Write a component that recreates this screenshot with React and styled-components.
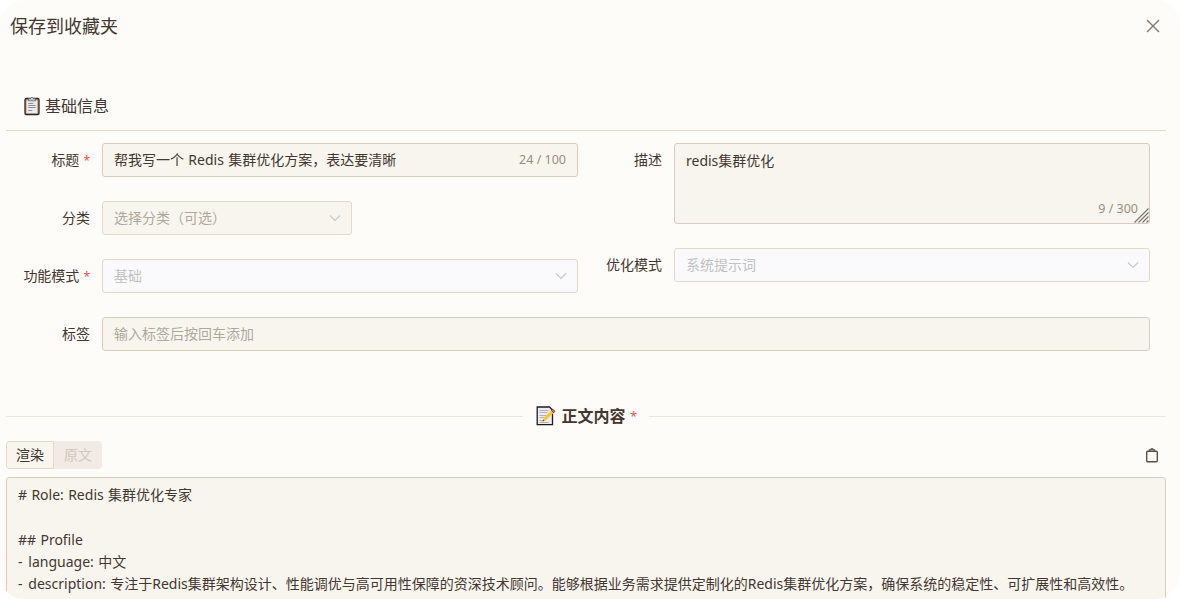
import React, { useState } from "react";
import styled, { createGlobalStyle } from "styled-components";

const lines = [
  { text: "# Role: Redis 集群优化专家" },
  { text: "" },
  { text: "## Profile" },
  { text: " language: 中文", item: true },
  {
    text: " description: 专注于Redis集群架构设计、性能调优与高可用性保障的资深技术顾问。能够根据业务需求提供定制化的Redis集群优化方案，确保系统的稳定性、可扩展性和高效性。",
    item: true,
  },
];

const ChevronIcon = () => (
  <Chevron viewBox="0 0 12 12">
    <path d="M1 3.5 L6 8.5 L11 3.5" />
  </Chevron>
);

const ClipboardIcon = () => (
  <svg width="20" height="20" viewBox="0 0 20 20">
    <rect x="3" y="2.5" width="14" height="16" rx="1.3" fill="#c9a06a" stroke="#29242b" strokeWidth="1.3" />
    <path d="M4.6 4.6h10.6v12.6H4.6z" fill="#e9ebf0" />
    <path d="M6.5 4.8V2.6h2L10 1l1.5 1.6h2v2.2z" fill="#c9c9ce" stroke="#55535a" strokeWidth="0.7" />
    <path d="M6.3 7.5h5M6.3 9.5h7.4M6.3 11.5h7.4M6.3 14.5h4" stroke="#8d8b94" strokeWidth="1" />
  </svg>
);

const MemoIcon = () => (
  <svg width="20" height="20" viewBox="0 0 20 20">
    <path d="M1.2 1h12.3L16.5 4V18.7H1.2z" fill="#ececee" stroke="#1d1b22" strokeWidth="1.3" />
    <path d="M3.5 4.5h9M3.5 6.5h8M3.5 9.5h7M3.5 11.5h5M3.5 14.5h3M3.5 16.5h9" stroke="#b1b1b7" strokeWidth="1" />
    <path d="M6.5 15.4l1.1-3.4 8.7-8.6 2.3 2.3-8.7 8.6z" fill="#f9c33e" />
    <path d="M6.5 15.4l.6-1.8 1.2 1.2z" fill="#4b3b2c" />
    <path d="M15.4 4.4l1.3-1.3 2.4 2.3-1.4 1.4z" fill="#e9655c" stroke="#241f24" strokeWidth="0.6" />
  </svg>
);

const App = () => {
  const [mode, setMode] = useState("render");

  return (
    <Modal>
      <GlobalStyle />
      <Header>
        <Title>保存到收藏夹</Title>
        <CloseBtn aria-label="close">
          <svg width="14" height="14" viewBox="0 0 14 14">
            <path d="M1 1l12 12M13 1L1 13" stroke="#84796f" strokeWidth="1.4" />
          </svg>
        </CloseBtn>
      </Header>
      <SectionTitle>
        <ClipboardIcon />
        <span>基础信息</span>
      </SectionTitle>
      <Form>
        <Column>
          <Field>
            <Label>
              标题<Star>*</Star>
            </Label>
            <Control>
              <span>帮我写一个 Redis 集群优化方案，表达要清晰</span>
              <Count>24 / 100</Count>
            </Control>
          </Field>
          <Field>
            <Label>分类</Label>
            <Control $width="250px" $type="select">
              <span>选择分类（可选）</span>
              <ChevronIcon />
            </Control>
          </Field>
          <Field>
            <Label>
              功能模式<Star>*</Star>
            </Label>
            <Control $type="disabled">
              <span>基础</span>
              <ChevronIcon />
            </Control>
          </Field>
        </Column>
        <Column>
          <Field>
            <Label>描述</Label>
            <TextArea>
              <span>redis集群优化</span>
              <AreaCount>9 / 300</AreaCount>
              <Handle width="15" height="15" viewBox="0 0 15 15">
                <path d="M0.5 14.5l14-14M4.5 14.5l10-10M8.5 14.5l6-6M12.5 14.5l2-2" />
              </Handle>
            </TextArea>
          </Field>
          <Field>
            <Label>优化模式</Label>
            <Control $type="disabled">
              <span>系统提示词</span>
              <ChevronIcon />
            </Control>
          </Field>
        </Column>
        <WideField>
          <Label>标签</Label>
          <Control $type="placeholder">
            <span>输入标签后按回车添加</span>
          </Control>
        </WideField>
      </Form>
      <Divider>
        <DividerTitle>
          <MemoIcon />
          <strong>正文内容</strong>
          <Star $big>*</Star>
        </DividerTitle>
      </Divider>
      <Toolbar>
        <Tabs>
          <Tab $active={mode === "render"} onClick={() => setMode("render")}>
            渲染
          </Tab>
          <Tab $active={mode === "source"} onClick={() => setMode("source")}>
            原文
          </Tab>
        </Tabs>
        <CopyBtn aria-label="copy">
          <svg width="14" height="16" viewBox="0 0 14 16" fill="none" stroke="#5b5049" strokeWidth="1.4">
            <rect x="1.7" y="4.2" width="10.6" height="10.6" rx="1" />
            <path d="M4.5 4V2.9h1.3a1.2 1.2 0 0 1 2.4 0h1.3V4" />
          </svg>
        </CopyBtn>
      </Toolbar>
      <Content>
        {lines.map((line, index) => (
          <Line key={index}>
            {line.item ? <Dash>-</Dash> : null}
            {line.text}
          </Line>
        ))}
      </Content>
    </Modal>
  );
};

export default App;

const GlobalStyle = createGlobalStyle`
  body {
    margin: 0;
    background-color: #fff;
    overflow: hidden;
  }

  * {
    box-sizing: border-box;
  }
`;

const Modal = styled.div`
  width: 1180px;
  height: 599px;
  padding: 0 14px 0 6px;
  border-radius: 24px;
  background-color: #fefcf8;
  color: #443730;
  font-family: "Noto Sans", "Noto Sans CJK SC", sans-serif;
  font-size: 14px;
  line-height: 22.4px;
  word-spacing: 0.7px;
  overflow: hidden;
  display: flex;
  flex-direction: column;
`;

const Header = styled.div`
  height: 54px;
  padding-left: 4px;
  display: flex;
  align-items: center;
  justify-content: space-between;
  flex-shrink: 0;
`;

const Title = styled.div`
  margin-bottom: 2px;
  font-size: 18px;
`;

const CloseBtn = styled.button`
  display: flex;
  padding: 0;
  margin: 0 6px 2px 0;
  border: none;
  background-color: transparent;
  cursor: pointer;
`;

const SectionTitle = styled.div`
  height: 77px;
  padding: 28px 0 0 15.5px;
  border-bottom: 1px solid #e4d8c8;
  display: flex;
  align-items: center;
  gap: 3.5px;
  font-size: 16px;
  flex-shrink: 0;
`;

const Form = styled.div`
  margin-top: 12px;
  padding-right: 16px;
  display: grid;
  grid-template-columns: 572px 572px;
  row-gap: 24px;
  flex-shrink: 0;
`;

const Column = styled.div`
  display: flex;
  flex-direction: column;
  gap: 24px;
`;

const Field = styled.div`
  display: flex;
  gap: 12px;
`;

const WideField = styled(Field)`
  grid-column: 1 / 3;
`;

const Label = styled.div`
  width: 84px;
  height: 34px;
  line-height: 34px;
  text-align: right;
  white-space: nowrap;
  flex-shrink: 0;
`;

const Star = styled.span`
  margin-left: ${(props) => (props.$big ? "-1px" : "4px")};
  color: #ea4f4a;
  font-size: ${(props) => (props.$big ? "13px" : "12px")};
`;

const Control = styled.div`
  width: ${(props) => props.$width || "auto"};
  flex: ${(props) => (props.$width ? "none" : "1")};
  height: 34px;
  padding: 0 11px;
  border: 1px solid ${(props) => (props.$type === "disabled" || props.$type === "select" ? "#e4d8c8" : "#d9ccbd")};
  border-radius: 3px;
  background-color: ${(props) => (props.$type === "disabled" ? "#fafafc" : "#f8f5ef")};
  color: ${(props) => (props.$type === "disabled" ? "#c2c2c2" : props.$type ? "#b0a79c" : "#443730")};
  display: flex;
  align-items: center;
  justify-content: space-between;
`;

const Count = styled.span`
  padding-top: 1px;
  color: #9a8d80;
  font-size: 12.5px;
  word-spacing: 0;
`;

const Chevron = styled.svg`
  width: 12px;
  height: 12px;
  margin-right: -1px;
  fill: none;
  stroke: #cbc9c6;
  stroke-width: 1.2;
`;

const TextArea = styled.div`
  position: relative;
  flex: 1;
  height: 81px;
  padding: 6px 11px;
  border: 1px solid #d9ccbd;
  border-radius: 3px;
  background-color: #f8f5ef;
`;

const AreaCount = styled(Count)`
  position: absolute;
  right: 11px;
  bottom: 3px;
`;

const Handle = styled.svg`
  position: absolute;
  right: 0;
  bottom: 0;
  stroke: #77736e;
  stroke-width: 1.1;
`;

const Divider = styled.div`
  height: 32px;
  margin-top: 49px;
  display: flex;
  align-items: center;
  flex-shrink: 0;

  &::before,
  &::after {
    content: "";
    flex: 1;
    height: 1px;
    background-color: #efe4d9;
  }
`;

const DividerTitle = styled.div`
  display: flex;
  align-items: center;
  gap: 5.5px;
  padding: 0 12px 0 13px;
  font-size: 16px;

  strong {
    font-weight: 700;
  }
`;

const Toolbar = styled.div`
  height: 28px;
  margin-top: 9px;
  display: flex;
  align-items: center;
  justify-content: space-between;
  flex-shrink: 0;
`;

const Tabs = styled.div`
  display: flex;
  border-radius: 3px;
  overflow: hidden;
`;

const Tab = styled.button`
  width: 48px;
  height: 28px;
  padding: 0 0 2px;
  border: 1px solid ${(props) => (props.$active ? "#e4d8c8" : "#f2eae4")};
  border-radius: ${(props) => (props.$active ? "3px 0 0 3px" : "0 3px 3px 0")};
  background-color: ${(props) => (props.$active ? "#f8f5ef" : "#f2eae4")};
  color: ${(props) => (props.$active ? "#443730" : "#cfc8c2")};
  font-family: inherit;
  font-size: 14px;
  cursor: pointer;
`;

const CopyBtn = styled.button`
  display: flex;
  padding: 0;
  margin-right: 7px;
  border: none;
  background-color: transparent;
  cursor: pointer;
`;

const Content = styled.div`
  height: 200px;
  margin-top: 8px;
  padding: 6px 11px;
  border: 1px solid #d9ccbd;
  border-radius: 3px;
  background-color: #f8f5ef;
  line-height: 22.3px;
  flex-shrink: 0;
`;

const Line = styled.div`
  min-height: 22.3px;
  white-space: pre-wrap;
`;

const Dash = styled.span`
  margin-right: 1.5px;
`;
